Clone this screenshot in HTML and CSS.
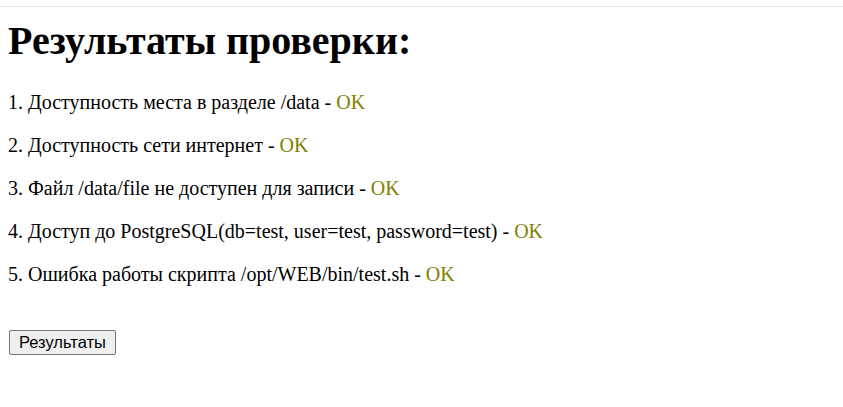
FILE: index.html
```html
<!DOCTYPE html>
<html>
<head>
<meta charset="utf-8">
<link rel="stylesheet" href="styles.css">
</head>
<body>
<div class="topline"></div>
<div class="content">
  <h1 class="title">Результаты проверки:</h1>
  <p class="item">1. Доступность места в разделе /data - <span class="ok">OK</span></p>
  <p class="item">2. Доступность сети интернет - <span class="ok">OK</span></p>
  <p class="item">3. Файл /data/file не доступен для записи - <span class="ok">OK</span></p>
  <p class="item">4. Доступ до PostgreSQL(db=test, user=test, password=test) - <span class="ok">OK</span></p>
  <p class="item">5. Ошибка работы скрипта /opt/WEB/bin/test.sh - <span class="ok">OK</span></p>
  <form class="form">
    <button type="button" class="btn">Результаты</button>
  </form>
</div>
</body>
</html>
```

FILE: styles.css
```css
html, body {
  margin: 0;
  padding: 0;
  background: #ffffff;
}
body {
  font-family: "Liberation Serif", "Times New Roman", serif;
  font-size: 20px;
  color: #000000;
}
.topline {
  margin-top: 6px;
  height: 0;
  border-top: 1px solid #e6e6e6;
}
.content {
  padding: 0 8px;
}
.title {
  font-size: 40px;
  font-weight: bold;
  margin: 10px 0 27px;
}
.item {
  margin: 20px 0;
}
.ok {
  color: #808000;
}
.form {
  margin-top: 44px;
}
.btn {
  display: block;
  height: 25px;
  font-family: "Liberation Sans", Arial, sans-serif;
  font-size: 16.5px;
  line-height: 19px;
  padding: 2px 9px;
  background: #efefef;
  border: 1px solid #767676;
  border-radius: 2px;
  color: #000;
  margin: 0 0 0 1px;
}
```
